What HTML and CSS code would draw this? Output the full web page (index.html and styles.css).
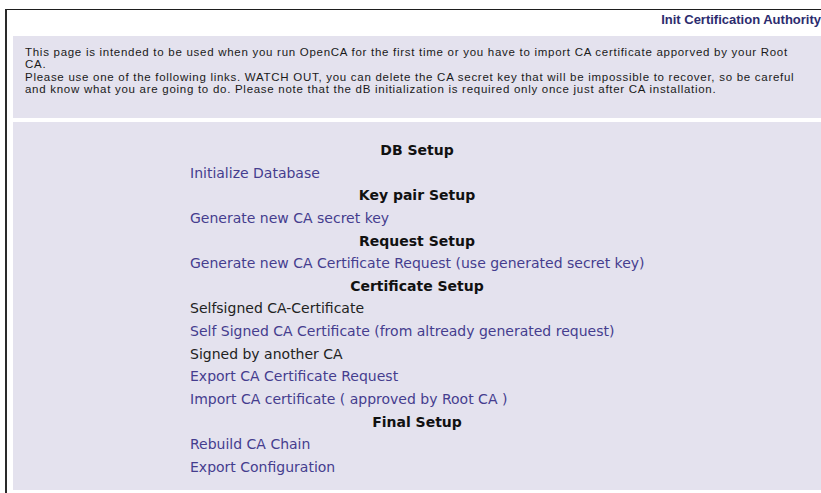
FILE: index.html
```html
<!DOCTYPE html>
<html lang="en">
<head>
<meta charset="utf-8">
<title>Init Certification Authority</title>
<link rel="stylesheet" href="styles.css">
</head>
<body>
<div class="frame">
  <div class="title">Init Certification Authority</div>
  <div class="panel intro">
    <p>This page is intended to be used when you run OpenCA for the first time or you have to import CA certificate apporved by your Root<br>CA.<br>Please use one of the following links. WATCH OUT, you can delete the CA secret key that will be impossible to recover, so be careful<br>and know what you are going to do. Please note that the dB initialization is required only once just after CA installation.</p>
  </div>
  <div class="panel setup">
    <div class="menu">
      <div class="head">DB Setup</div>
      <a class="item" href="#">Initialize Database</a>
      <div class="head">Key pair Setup</div>
      <a class="item" href="#">Generate new CA secret key</a>
      <div class="head">Request Setup</div>
      <a class="item" href="#">Generate new CA Certificate Request (use generated secret key)</a>
      <div class="head">Certificate Setup</div>
      <div class="item label">Selfsigned CA-Certificate</div>
      <a class="item" href="#">Self Signed CA Certificate (from altready generated request)</a>
      <div class="item label">Signed by another CA</div>
      <a class="item" href="#">Export CA Certificate Request</a>
      <a class="item" href="#">Import CA certificate ( approved by Root CA )</a>
      <div class="head">Final Setup</div>
      <a class="item" href="#">Rebuild CA Chain</a>
      <a class="item" href="#">Export Configuration</a>
    </div>
  </div>
</div>
</body>
</html>
```
FILE: styles.css
```css
html, body {
  margin: 0;
  padding: 0;
  background: #ffffff;
  overflow: hidden;
}

.frame {
  margin: 9px 0 0 5px;
  height: 484px;
  border-top: 1px solid #1e1e1e;
  border-left: 2px solid #2a2a2a;
  padding-left: 6px;
  box-sizing: border-box;
}

.title {
  height: 26px;
  box-sizing: border-box;
  padding-top: 2px;
  text-align: right;
  font-family: "Liberation Sans", Arial, sans-serif;
  font-weight: bold;
  font-size: 13px;
  line-height: 16px;
  color: #2c2c6e;
  white-space: nowrap;
}

.panel {
  background: #e4e2ee;
}

.intro {
  height: 82px;
  padding: 10px 12px 0 12px;
  box-sizing: border-box;
  margin-bottom: 4px;
}

.intro p {
  margin: 0;
  font-family: "Liberation Sans", Arial, sans-serif;
  font-size: 11.5px;
  line-height: 12.3px;
  color: #1a1a1a;
  white-space: nowrap;
  letter-spacing: 0.72px;
}

.setup {
  height: 368px;
  padding-top: 17px;
  box-sizing: border-box;
  display: flex;
  justify-content: center;
}

.menu {
  display: flex;
  flex-direction: column;
  width: 454px;
  font-family: "DejaVu Sans", Verdana, sans-serif;
  font-size: 14px;
  line-height: 22.64px;
}

.head {
  text-align: center;
  font-weight: bold;
  color: #111111;
}

.item {
  text-decoration: none;
  color: #453d8e;
  white-space: nowrap;
}

.item.label {
  color: #222222;
}
```
